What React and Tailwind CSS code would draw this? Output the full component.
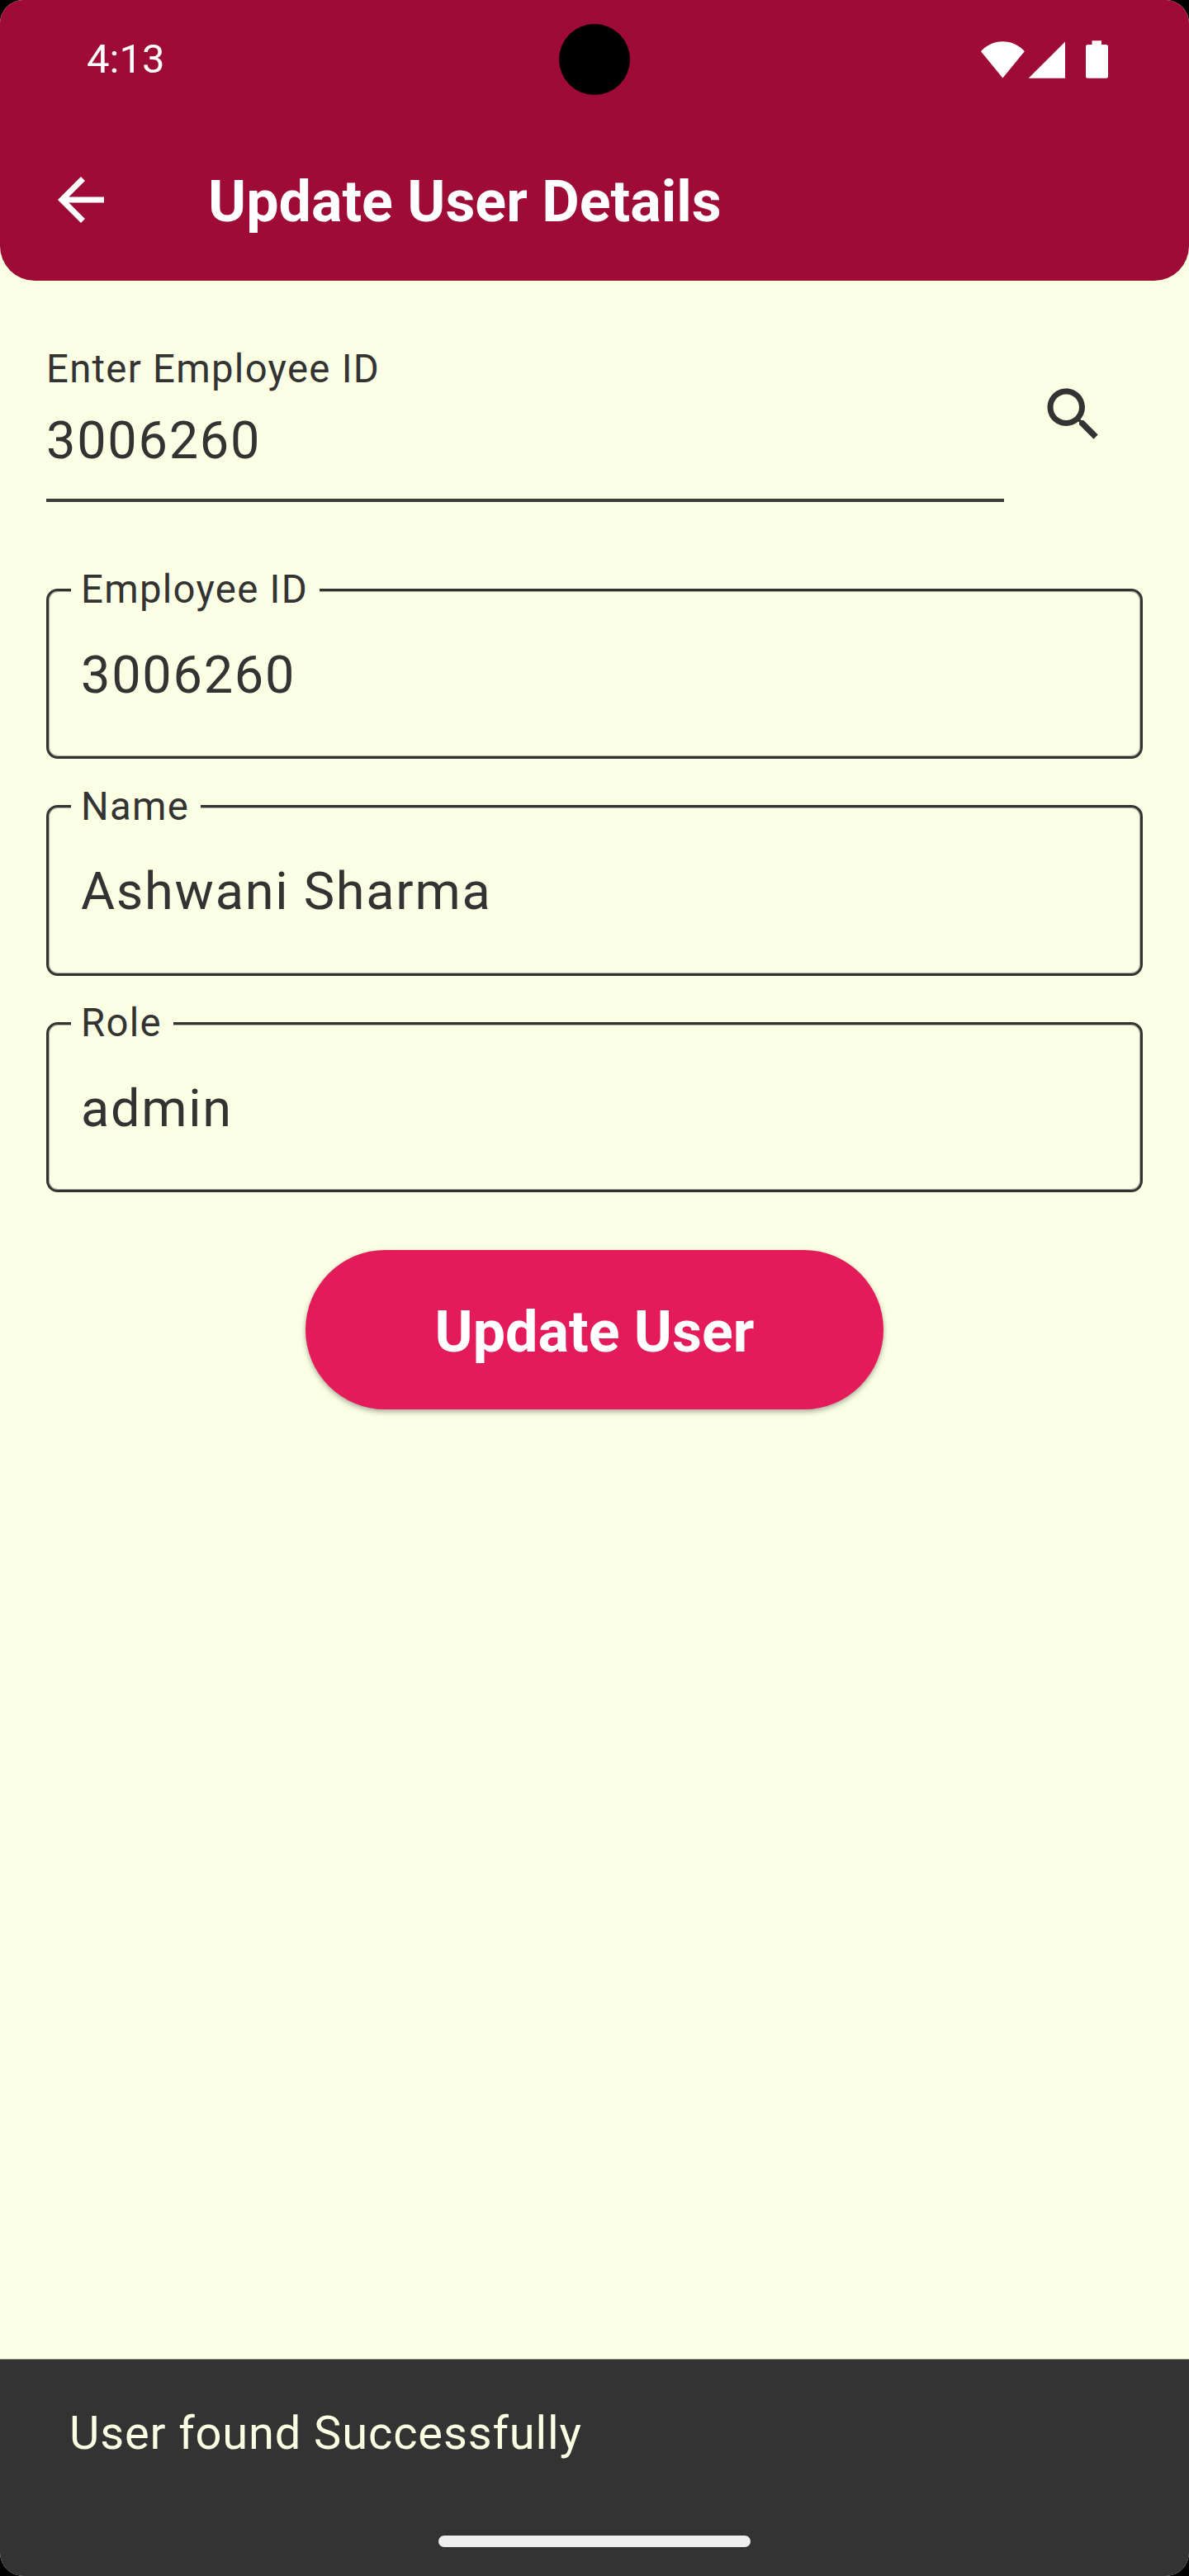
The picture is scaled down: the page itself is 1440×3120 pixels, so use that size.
function StatusIcons() {
  return (
    <svg className="h-[60px] w-[160px]" viewBox="1185 42 160 60" fill="#fff">
      <path d="M1188 62.2C1194.4 55 1204 50.3 1214.4 50.3S1234.400 55 1240.800 62.200L1214.400 94.500Z" />
      <path d="M1290 50.500V94.700H1245.600Z" />
      <path d="M1322.500 49.300H1334V54H1339.500A2.500 2.500 0 0 1 1342 56.500V92.200A2.500 2.500 0 0 1 1339.500 94.700H1317.500A2.500 2.500 0 0 1 1315 92.200V56.500A2.500 2.500 0 0 1 1317.500 54H1322.500Z" />
    </svg>
  );
}

function BackIcon() {
  return (
    <svg className="size-[84px]" viewBox="0 0 24 24" fill="#fff">
      <path d="M20 11H7.830l5.590-5.590L12 4l-8 8 8 8 1.410-1.410L7.830 13H20v-2z" />
    </svg>
  );
}

function SearchIcon() {
  return (
    <svg className="size-[84px]" viewBox="0 0 24 24" fill="#333">
      <path d="M15.5 14h-.79l-.28-.27C15.41 12.59 16 11.11 16 9.5 16 5.91 13.090 3 9.5 3S3 5.910 3 9.5 5.910 16 9.5 16c1.610 0 3.090-.59 4.230-1.570l.27.28v.79l5 4.990L20.490 19l-4.990-5zm-6 0C7.010 14 5 11.990 5 9.5S7.010 5 9.5 5 14 7.010 14 9.5 11.990 14 9.5 14z" />
    </svg>
  );
}

function OutlinedField({ label, value }) {
  return (
    <div className="relative h-[206.5px] rounded-[14px] border-3 border-[#333] pt-[67px] pl-[39px] shadow-[inset_0_0_0_1px_#33333366]">
      <label className="absolute -top-[36.5px] left-[27px] bg-[#fbffe3] pr-[14px] pl-[12px] text-[47.25px] leading-[70px] tracking-[1.3125px]">
        {label}
      </label>
      <div className="text-[63px] leading-[70px] tracking-[1.75px]">{value}</div>
    </div>
  );
}

export default function App() {
  return (
    <div className="h-[3120px] w-[1440px] bg-black">
      <div className="flex h-full flex-col overflow-hidden rounded-[28px] bg-[#fbffe3] font-['Roboto',sans-serif] text-[#333]">
        <header className="h-[340px] shrink-0 rounded-b-[42px] bg-[#9e0b36] text-white">
          <div className="grid h-[144px] grid-cols-3 items-center pr-[95px] pl-[105px]">
            <span className="text-[49px] leading-[56px]">4:13</span>
            <span className="mr-[10px] size-[86px] justify-self-center rounded-full bg-black" />
            <span className="justify-self-end">
              <StatusIcons />
            </span>
          </div>
          <div className="flex h-[196px] items-center pl-[56px]">
            <BackIcon />
            <h1 className="ml-[112px] pt-[3px] text-[70px] leading-[84px] font-bold">Update User Details</h1>
          </div>
        </header>

        <main className="flex flex-1 flex-col px-[56px]">
          <div className="flex h-[372.5px]">
            <div className="flex h-[268px] w-[1160px] flex-col border-b-4 border-[#3d3d3b] pt-[77px]">
              <label className="text-[47.25px] leading-[60px] tracking-[1.3125px]">Enter Employee ID</label>
              <div className="mt-[22px] text-[63px] leading-[70px] tracking-[1.75px]">3006260</div>
            </div>
            <button className="mt-[120px] ml-[42px] size-[84px]">
              <SearchIcon />
            </button>
          </div>

          <div className="flex flex-col gap-[56px]">
            <OutlinedField label="Employee ID" value="3006260" />
            <OutlinedField label="Name" value="Ashwani Sharma" />
            <OutlinedField label="Role" value="admin" />
          </div>

          <button className="mt-[70px] h-[193px] w-[700px] self-center rounded-full bg-[#e41b5a] pt-[5px] text-[70px] leading-[84px] font-bold text-white shadow-[0_3.5px_7px_#00000038,0_2px_5px_#00000020]">
            Update User
          </button>
        </main>

        <footer className="flex h-[263px] shrink-0 flex-col border-t border-[#8f9084] bg-[#333]">
          <p className="mt-[54px] ml-[84px] text-[56px] leading-[70px] tracking-[0.875px] text-[#fbffe3]">
            User found Successfully
          </p>
          <div className="mt-[89px] h-[14px] w-[378px] self-center rounded-full bg-[#eee]" />
        </footer>
      </div>
    </div>
  );
}
